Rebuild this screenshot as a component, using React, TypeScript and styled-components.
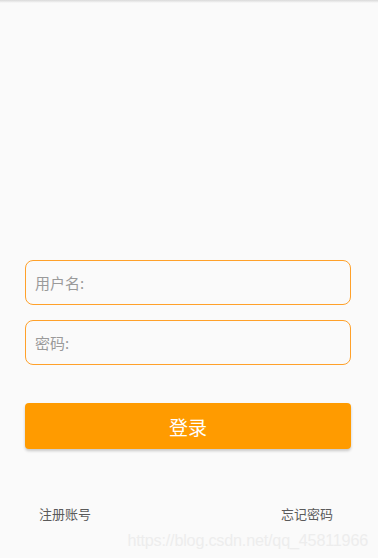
import React from 'react';
import styled, { createGlobalStyle } from 'styled-components';

const GlobalStyle = createGlobalStyle`
  html, body {
    margin: 0;
    padding: 0;
    background: #fafafa;
  }
  * {
    box-sizing: border-box;
  }
  body {
    font-family: Roboto, "Noto Sans CJK SC", sans-serif;
  }
`;

const Page = styled.div`
  width: 378px;
  height: 558px;
  background: #fafafa;
  display: flex;
  flex-direction: column;
  overflow: hidden;
`;

const TopShade = styled.div`
  height: 3px;
  background: linear-gradient(#d9d9d9, #fafafa);
`;

const Form = styled.div`
  display: flex;
  flex-direction: column;
  padding: 257px 27px 0 25px;
`;

const Field = styled.label<{ gap?: number }>`
  display: flex;
  align-items: center;
  height: 45px;
  margin-bottom: ${({ gap }) => gap ?? 0}px;
  padding-left: 9px;
  border: 1px solid #ffa12a;
  border-radius: 8px;
  background: #fafafa;
`;

const FieldLabel = styled.span`
  font-family: "Noto Sans CJK SC", sans-serif;
  font-size: 15px;
  color: #9a9a9a;
  margin-right: 2px;
`;

const FieldInput = styled.input`
  flex: 1;
  height: 100%;
  border: none;
  outline: none;
  background: transparent;
  font-size: 15px;
`;

const LoginButton = styled.button`
  height: 46px;
  margin-top: 38px;
  border: none;
  border-radius: 4px;
  background: #ff9b00;
  color: #ffffff;
  font-family: "Noto Sans CJK SC", sans-serif;
  font-size: 19px;
  box-shadow: 0 2px 3px rgba(0, 0, 0, 0.2);
  cursor: pointer;
`;

const Links = styled.div`
  display: flex;
  justify-content: space-between;
  padding: 0 45px 0 39px;
  margin-top: 55px;
`;

const LinkText = styled.span`
  font-family: "Noto Sans CJK SC", sans-serif;
  font-size: 13px;
  color: #5a5a5a;
`;

const Watermark = styled.div`
  align-self: flex-end;
  margin: 8px 10px 0 0;
  font-family: "Liberation Sans", Arial, sans-serif;
  font-size: 16.2px;
  color: #ededed;
  letter-spacing: -0.2px;
`;

const App: React.FC = () => {
  return (
    <>
      <GlobalStyle />
      <Page>
        <TopShade />
        <Form>
          <Field gap={15}>
            <FieldLabel>用户名:</FieldLabel>
            <FieldInput />
          </Field>
          <Field>
            <FieldLabel>密码:</FieldLabel>
            <FieldInput type="password" />
          </Field>
          <LoginButton>登录</LoginButton>
        </Form>
        <Links>
          <LinkText>注册账号</LinkText>
          <LinkText>忘记密码</LinkText>
        </Links>
        <Watermark>https://blog.csdn.net/qq_45811966</Watermark>
      </Page>
    </>
  );
};

export default App;
